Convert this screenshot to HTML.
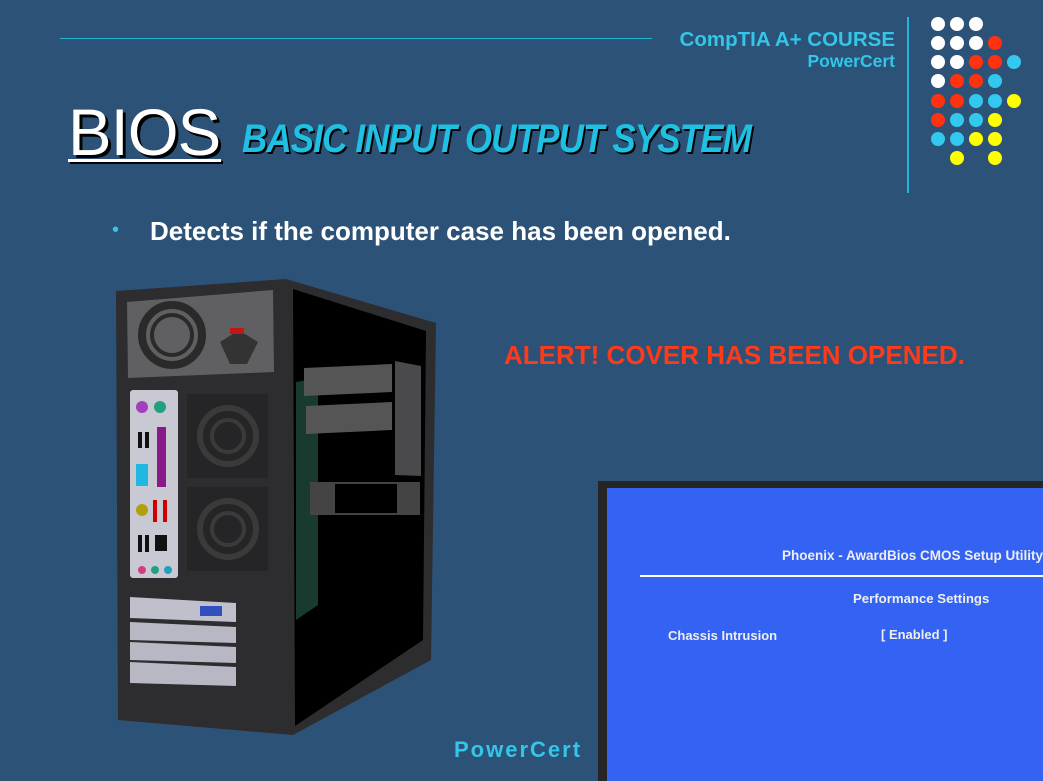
<!DOCTYPE html>
<html><head><meta charset="utf-8"><style>
body{margin:0;width:1043px;height:781px;overflow:hidden;background:#2c5277;font-family:"Liberation Sans",sans-serif;position:relative}
.a{position:absolute;white-space:nowrap}
</style></head><body>
<div class="a" style="left:60px;top:38px;width:592px;height:1px;background:#1fb8d8"></div>
<div class="a" style="left:907px;top:17px;width:2px;height:176px;background:#1fb8d8"></div>
<div class="a" style="right:148px;top:28px;color:#33c6e8;font-weight:bold;font-size:20.5px">CompTIA A+ COURSE</div>
<div class="a" style="right:148px;top:51px;color:#33c6e8;font-weight:bold;font-size:17.5px">PowerCert</div>
<div class="a" style="left:68px;top:94px;color:#fff;font-size:66px;transform:scaleX(0.99);transform-origin:left;text-shadow:3px 3px 0 #000;letter-spacing:-1px">BIOS</div>
<div class="a" style="left:68px;top:159px;width:153px;height:3px;background:#fff;box-shadow:2px 2px 0 #000"></div>
<div class="a" style="left:242px;top:117px;color:#1fc0e2;font-size:40px;font-weight:bold;font-style:italic;transform:scaleX(0.875);transform-origin:left;text-shadow:2px 2px 0 #000;letter-spacing:-1px">BASIC INPUT OUTPUT SYSTEM</div>
<div class="a" style="left:112px;top:219px;color:#33c6e8;font-size:20px">•</div>
<div class="a" style="left:150px;top:216px;color:#fff;font-weight:bold;font-size:26px">Detects if the computer case has been opened.</div>
<div class="a" style="left:504px;top:340px;color:#ff3a1a;font-weight:bold;font-size:26px">ALERT! COVER HAS BEEN OPENED.</div>
<div class="a" style="left:454px;top:737px;color:#33c6e8;font-weight:bold;font-size:22px;letter-spacing:2px">PowerCert</div>

<svg class="a" style="left:0;top:0" width="1043" height="781">
<g>
<circle cx="938" cy="24" r="7" fill="#fff"/><circle cx="957" cy="24" r="7" fill="#fff"/><circle cx="976" cy="24" r="7" fill="#fff"/>
<circle cx="938" cy="43" r="7" fill="#fff"/><circle cx="957" cy="43" r="7" fill="#fff"/><circle cx="976" cy="43" r="7" fill="#fff"/><circle cx="995" cy="43" r="7" fill="#ff3210"/>
<circle cx="938" cy="62" r="7" fill="#fff"/><circle cx="957" cy="62" r="7" fill="#fff"/><circle cx="976" cy="62" r="7" fill="#ff3210"/><circle cx="995" cy="62" r="7" fill="#ff3210"/><circle cx="1014" cy="62" r="7" fill="#33c8f0"/>
<circle cx="938" cy="81" r="7" fill="#fff"/><circle cx="957" cy="81" r="7" fill="#ff3210"/><circle cx="976" cy="81" r="7" fill="#ff3210"/><circle cx="995" cy="81" r="7" fill="#33c8f0"/>
<circle cx="938" cy="101" r="7" fill="#ff3210"/><circle cx="957" cy="101" r="7" fill="#ff3210"/><circle cx="976" cy="101" r="7" fill="#33c8f0"/><circle cx="995" cy="101" r="7" fill="#33c8f0"/><circle cx="1014" cy="101" r="7" fill="#ffff00"/>
<circle cx="938" cy="120" r="7" fill="#ff3210"/><circle cx="957" cy="120" r="7" fill="#33c8f0"/><circle cx="976" cy="120" r="7" fill="#33c8f0"/><circle cx="995" cy="120" r="7" fill="#ffff00"/>
<circle cx="938" cy="139" r="7" fill="#33c8f0"/><circle cx="957" cy="139" r="7" fill="#33c8f0"/><circle cx="976" cy="139" r="7" fill="#ffff00"/><circle cx="995" cy="139" r="7" fill="#ffff00"/>
<circle cx="957" cy="158" r="7" fill="#ffff00"/><circle cx="995" cy="158" r="7" fill="#ffff00"/>
</g>
<polygon points="116,291 286,279 436,323 431,660 293,735 118,720" fill="#2d2d2f"/>
<polygon points="293,289 426,331 423,640 295,726" fill="#000"/>
<polygon points="296,382 318,378 318,605 296,620" fill="#183a2f"/>
<polygon points="304,368 392,364 392,392 304,396" fill="#555"/>
<polygon points="306,406 392,402 392,430 306,434" fill="#555"/>
<polygon points="395,361 421,366 421,476 395,475" fill="#4a4a4c"/>
<polygon points="310,482 420,482 420,515 310,515" fill="#444"/>
<rect x="335" y="484" width="62" height="29" fill="#000"/>
<polygon points="127,302 273,290 274,372 128,378" fill="#606063"/>
<circle cx="172" cy="335" r="30" fill="none" stroke="#2a2a2a" stroke-width="8"/>
<circle cx="172" cy="335" r="20" fill="none" stroke="#2a2a2a" stroke-width="4"/>
<polygon points="220,342 233,334 245,334 258,342 247,364 230,364" fill="#333"/>
<rect x="230" y="328" width="14" height="6" fill="#c01818"/>
<rect x="130" y="390" width="48" height="188" rx="3" fill="#c9c9d4"/>
<circle cx="142" cy="407" r="6" fill="#a040c0"/><circle cx="160" cy="407" r="6" fill="#20a080"/>
<rect x="138" y="432" width="4" height="16" fill="#111"/><rect x="145" y="432" width="4" height="16" fill="#111"/>
<rect x="157" y="427" width="9" height="60" fill="#8a1a8a"/>
<rect x="136" y="464" width="12" height="22" fill="#20b8e0"/>
<circle cx="142" cy="510" r="6" fill="#b0a010"/><rect x="153" y="500" width="4" height="22" fill="#c00"/><rect x="163" y="500" width="4" height="22" fill="#c00"/>
<rect x="138" y="535" width="4" height="17" fill="#111"/><rect x="145" y="535" width="4" height="17" fill="#111"/><rect x="155" y="535" width="12" height="16" fill="#111"/>
<circle cx="142" cy="570" r="4" fill="#d04080"/><circle cx="155" cy="570" r="4" fill="#20a080"/><circle cx="168" cy="570" r="4" fill="#20a0c0"/>
<rect x="187" y="394" width="81" height="84" fill="#252527"/>
<circle cx="228" cy="436" r="28" fill="none" stroke="#3a3a3a" stroke-width="6"/><circle cx="228" cy="436" r="16" fill="none" stroke="#3a3a3a" stroke-width="4"/>
<rect x="187" y="487" width="81" height="84" fill="#252527"/>
<circle cx="228" cy="529" r="28" fill="none" stroke="#3a3a3a" stroke-width="6"/><circle cx="228" cy="529" r="16" fill="none" stroke="#3a3a3a" stroke-width="4"/>
<polygon points="130,597 236,603 236,622 130,618" fill="#c0c0cc"/>
<polygon points="130,622 236,627 236,643 130,640" fill="#b8b8c4"/>
<polygon points="130,642 236,647 236,663 130,660" fill="#b8b8c4"/>
<polygon points="130,662 236,667 236,686 130,683" fill="#b8b8c4"/>
<rect x="200" y="606" width="22" height="10" fill="#3050c0"/>
<rect x="598" y="481" width="445" height="300" fill="#252525"/>
<rect x="607" y="488" width="436" height="293" fill="#3463f3"/>
<rect x="640" y="575" width="403" height="2" fill="#fff"/>
<text x="782" y="560" fill="#eee" font-family="Liberation Sans" font-weight="bold" font-size="13.5">Phoenix  -  AwardBios CMOS Setup Utility</text>
<text x="853" y="603" fill="#eee" font-family="Liberation Sans" font-weight="bold" font-size="13.2">Performance Settings</text>
<text x="668" y="640" fill="#eee" font-family="Liberation Sans" font-weight="bold" font-size="13">Chassis Intrusion</text>
<text x="881" y="639" fill="#eee" font-family="Liberation Sans" font-weight="bold" font-size="13">[ Enabled ]</text>
</svg>
</body></html>
